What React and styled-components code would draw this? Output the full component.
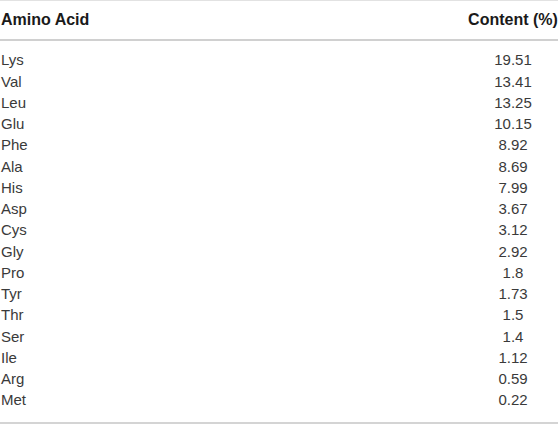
import React from "react";
import styled, { createGlobalStyle } from "styled-components";

const Global = createGlobalStyle`
  html, body { margin: 0; padding: 0; background: #fff; }
  body { font-family: "Liberation Sans", Arial, sans-serif; }
`;

const Table = styled.div`
  width: 558px;
  border-top: 1px solid #e2e2e2;
  border-bottom: 2px solid #d4d4d4;
  box-sizing: border-box;
`;

const HeadRow = styled.div`
  display: grid;
  grid-template-columns: 1fr 90px;
  height: 38px;
  align-items: center;
  border-bottom: 2px solid #d0d0d0;
  font-size: 16px;
  font-weight: 700;
  color: #1a1a1a;
`;

const Body = styled.div`
  padding: 8.4px 0 11.3px;
`;

const Row = styled.div`
  display: grid;
  grid-template-columns: 1fr 90px;
  height: 21.25px;
  line-height: 21.25px;
  font-size: 15px;
  color: #3a3a3a;
`;

const Cell = styled.div`
  padding-left: ${(p) => (p.$first ? "1px" : "0")};
  text-align: ${(p) => (p.$center ? "center" : "left")};
  white-space: nowrap;
`;

const data = [
  ["Lys", "19.51"],
  ["Val", "13.41"],
  ["Leu", "13.25"],
  ["Glu", "10.15"],
  ["Phe", "8.92"],
  ["Ala", "8.69"],
  ["His", "7.99"],
  ["Asp", "3.67"],
  ["Cys", "3.12"],
  ["Gly", "2.92"],
  ["Pro", "1.8"],
  ["Tyr", "1.73"],
  ["Thr", "1.5"],
  ["Ser", "1.4"],
  ["Ile", "1.12"],
  ["Arg", "0.59"],
  ["Met", "0.22"],
];

export default function App() {
  return (
    <>
      <Global />
      <Table>
        <HeadRow>
          <Cell $first>Amino Acid</Cell>
          <Cell $center>Content (%)</Cell>
        </HeadRow>
        <Body>
          {data.map(([a, v]) => (
            <Row key={a}>
              <Cell $first>{a}</Cell>
              <Cell $center>{v}</Cell>
            </Row>
          ))}
        </Body>
      </Table>
    </>
  );
}
